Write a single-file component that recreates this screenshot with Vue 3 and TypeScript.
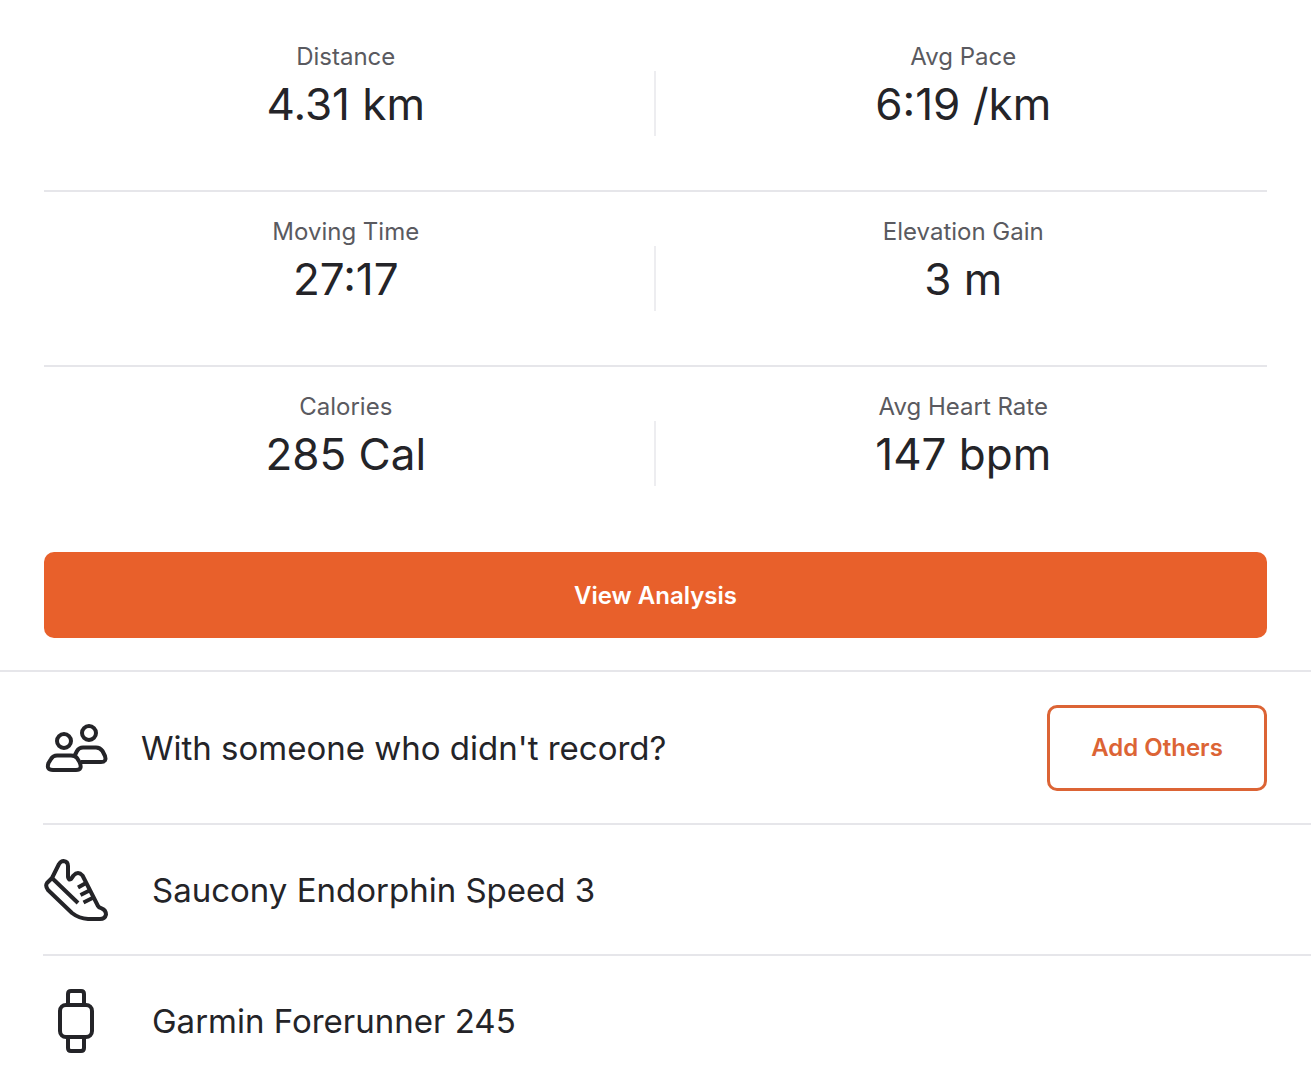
<script setup lang="ts">
interface Stat {
  label: string
  value: string
}

const stats: Stat[] = [
  { label: 'Distance', value: '4.31 km' },
  { label: 'Avg Pace', value: '6:19 /km' },
  { label: 'Moving Time', value: '27:17' },
  { label: 'Elevation Gain', value: '3 m' },
  { label: 'Calories', value: '285 Cal' },
  { label: 'Avg Heart Rate', value: '147 bpm' },
]
</script>

<template>
  <main class="activity">
    <section class="summary">
      <dl class="stats">
        <div v-for="stat in stats" :key="stat.label" class="stat">
          <dt>{{ stat.label }}</dt>
          <dd>{{ stat.value }}</dd>
        </div>
      </dl>
      <button type="button" class="button primary">View Analysis</button>
    </section>

    <ul class="details">
      <li class="row others">
        <svg class="icon" viewBox="0 0 66 66" aria-hidden="true">
          <circle cx="21" cy="26" r="7" />
          <circle cx="46" cy="18" r="7" />
          <path d="M14 40.500H28Q32 40.500 34 43L36.500 47Q40 55 33 55H10Q3 55 5.500 48L8 44Q10 40.500 14 40.500Z" />
          <path d="M31.500 41L34 36Q36 32.500 40 32.500H53Q57 32.500 59.500 36L62 41Q64 47 58 47H38" />
        </svg>
        <span class="text">With someone who didn't record?</span>
        <button type="button" class="button outline">Add Others</button>
      </li>
      <li class="row gear">
        <svg class="icon" viewBox="0 0 66 66" aria-hidden="true">
          <path d="M9 21L16 7Q18 4 20.500 4Q25 4.500 25 9V20Q25.500 23.500 28 22L30.500 18.500Q35 13.500 39.500 18.500L55 49Q56 51 58.500 51.300Q63 53 63 57.500Q62 62 57 62H45Q36 61.500 29 56L5 33Q2 29 4 26Z" />
          <path d="M9 21L35 46M43 26L35 30.500M46.500 33.500L37.500 38M50.500 40.500L40.500 45.500" />
        </svg>
        <span class="text">Saucony Endorphin Speed 3</span>
      </li>
      <li class="row gear">
        <svg class="icon" viewBox="0 0 66 66" aria-hidden="true">
          <rect x="17" y="17" width="32" height="32" rx="6" />
          <path d="M25 17V6Q25 3 28 3H38Q41 3 41 6V17M25 49V60Q25 63 28 63H38Q41 63 41 60V49" />
        </svg>
        <span class="text">Garmin Forerunner 245</span>
      </li>
    </ul>
  </main>
</template>

<style>
body {
  margin: 0;
  background: #fff;
}
</style>

<style scoped>
.activity {
  color: #242428;
  font-family: Inter, "Liberation Sans", sans-serif;
  padding-top: 17px;
}

.summary {
  padding: 0 44px 32px;
  border-bottom: 2px solid #e6e6ea;
}

.stats {
  display: grid;
  grid-template-columns: 1fr 1fr;
  margin: 0 0 10px;
}

.stat {
  height: 149px;
  padding-top: 24px;
  padding-left: 4px;
  border-bottom: 2px solid #e6e6ea;
  text-align: center;
}

.stat:nth-child(odd) {
  padding-right: 8px;
  padding-left: 0;
  background: linear-gradient(#ededf0, #ededf0) no-repeat right 54px / 2px 65px;
}

.stat:nth-last-child(-n + 2) {
  border-bottom-color: transparent;
}

.stat dt {
  color: #5a5a60;
  font-size: 24px;
  line-height: 32px;
}

.stat dd {
  margin: 3px 0 0;
  font-size: 44px;
  font-weight: 400;
  line-height: 56px;
}

.button {
  box-sizing: border-box;
  height: 86px;
  border-radius: 10px;
  font-family: inherit;
  font-size: 24px;
  font-weight: 600;
  cursor: pointer;
}

.primary {
  display: block;
  width: 100%;
  border: 0;
  background: #e8602b;
  color: #fff;
}

.outline {
  flex: none;
  width: 220px;
  margin-left: auto;
  border: 3px solid #dc6435;
  background: #fff;
  color: #dc6435;
}

.details {
  margin: 0 0 0 43px;
  padding: 0;
  list-style: none;
}

.row {
  display: flex;
  align-items: center;
  padding-right: 44px;
  border-bottom: 2px solid #e6e6ea;
}

.row:last-child {
  border-bottom: 0;
}

.others {
  height: 151px;
  gap: 32px;
}

.gear {
  height: 129px;
  gap: 43px;
}

.icon {
  flex: none;
  width: 66px;
  height: 66px;
  fill: none;
  stroke: #242428;
  stroke-width: 4;
  stroke-linejoin: round;
}

.text {
  font-size: 33px;
  font-weight: 400;
  line-height: 44px;
}
</style>
